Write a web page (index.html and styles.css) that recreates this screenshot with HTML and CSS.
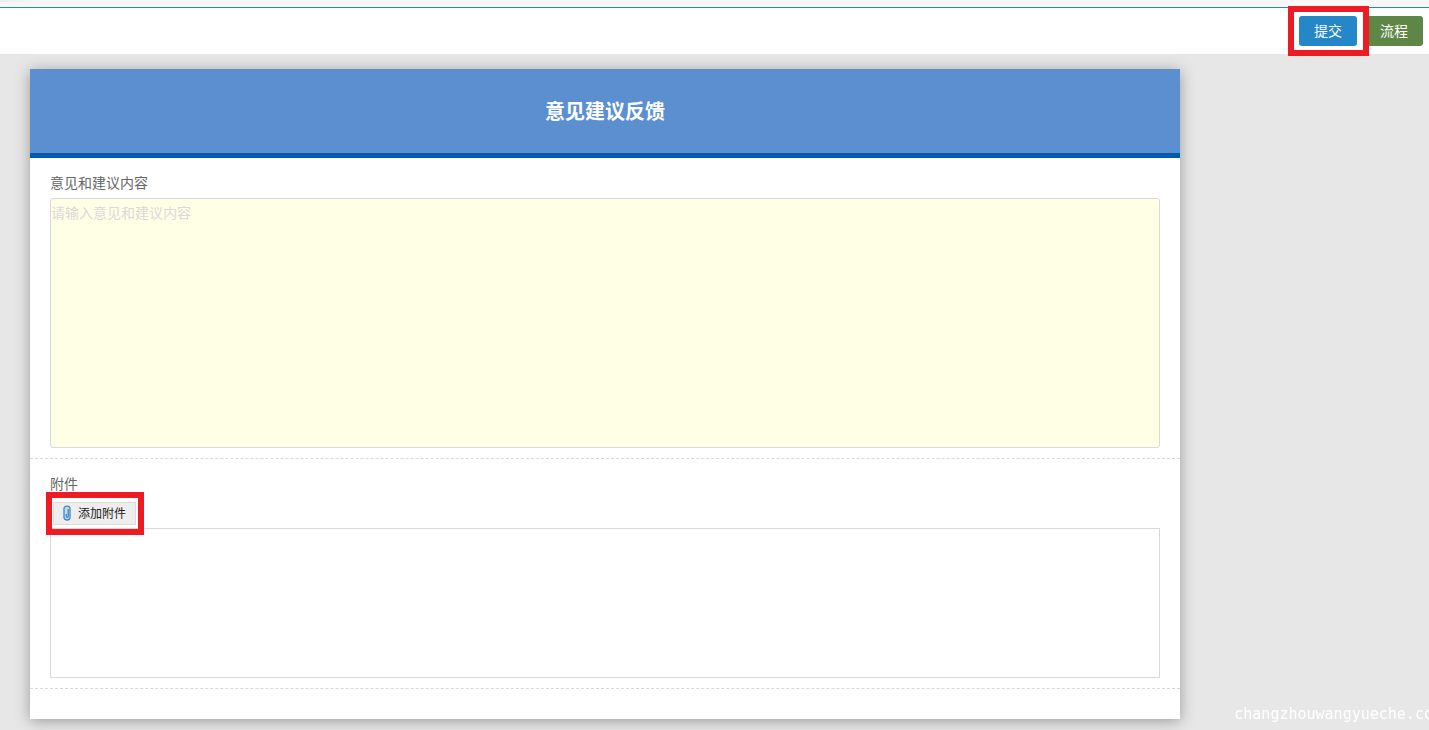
FILE: index.html
```html
<!DOCTYPE html>
<html lang="zh-CN">
<head>
<meta charset="utf-8">
<title>意见建议反馈</title>
<link rel="stylesheet" href="styles.css">
</head>
<body>
<div class="top-strip"></div>
<header class="toolbar">
  <span class="marked marked-submit"><button class="btn btn-submit" type="submit" form="feedback">提交</button></span>
  <button class="btn btn-flow" type="button">流程</button>
</header>
<main class="page">
  <form class="card" id="feedback">
    <h1 class="card-title">意见建议反馈</h1>
    <section class="field">
      <label class="field-label" for="content">意见和建议内容</label>
      <textarea class="content-input" id="content" placeholder="请输入意见和建议内容"></textarea>
    </section>
    <section class="field">
      <span class="field-label" id="files-label">附件</span>
      <div class="attach-bar">
        <span class="marked marked-attach"><button class="attach-btn" type="button">
          <svg class="clip" viewBox="0 0 8 16" aria-hidden="true">
            <rect class="clip-fill" x="1" y="1" width="6" height="14" rx="3"/>
            <path class="clip-line" d="M1 7V3.500C1 .3 7 .3 7 3.500V12.500C7 15.800 1 15.800 1 12.500V5M3.200 9V11C3.200 12.800 5.200 12.800 5.200 11V4"/>
          </svg>添加附件</button></span>
      </div>
      <div class="attach-list" role="group" aria-labelledby="files-label"></div>
    </section>
  </form>
</main>
<div class="watermark">changzhouwangyueche.com</div>
</body>
</html>
```
FILE: styles.css
```css
* {
  box-sizing: border-box;
}

body {
  display: flex;
  flex-direction: column;
  min-height: 100vh;
  margin: 0;
  overflow-x: hidden;
  background: #e7e7e7;
  color: #666;
  font: 14px/20px "Noto Sans CJK SC", sans-serif;
}

button,
textarea {
  margin: 0;
  font-family: inherit;
}

.top-strip {
  height: 8px;
  background: linear-gradient(90deg, #eee 0, #f7f7f7 48px) top left / 48px 2px no-repeat #f7f7f7;
  border-bottom: 1px solid #2587c8;
}

.toolbar {
  display: flex;
  justify-content: flex-end;
  gap: 8px;
  padding: 8px 6px;
  background: #fff;
}

.btn {
  display: block;
  width: 58px;
  height: 30px;
  padding: 0 0 2px;
  border: 0;
  border-radius: 3px;
  color: #fff;
  font-size: 14px;
  line-height: 28px;
}

.btn-submit {
  background: #2587c8;
}

.btn-flow {
  background: #5e8746;
}

/* Red highlight frame drawn over the surrounding content */
.marked {
  position: relative;
  display: block;
  z-index: 1;
}

.marked::after {
  content: "";
  position: absolute;
  border: 6px solid #ed1c24;
  pointer-events: none;
}

.marked-submit::after {
  inset: -10px -12px -10px -11px;
}

.marked-attach::after {
  inset: -10px -8px -10px -7px;
}

.page {
  padding: 15px 30px 11px;
}

.card {
  max-width: 1150px;
  padding-bottom: 30px;
  background: #fff;
  box-shadow: 0 2px 14px #999;
}

.card-title {
  margin: 0;
  padding: 27px 20px;
  background: #5b8fd0;
  border-bottom: 5px solid #005bac;
  color: #fff;
  font-size: 20px;
  line-height: 30px;
  font-weight: 700;
  text-align: center;
}

.field {
  padding: 14px 20px 10px;
  border-bottom: 1px dashed #d9d9d9;
}

.field-label {
  display: block;
  padding-bottom: 6px;
}

.content-input {
  display: block;
  width: 100%;
  height: 250px;
  padding: 3px 0;
  border: 1px solid #d9d9d9;
  border-radius: 3px;
  background: #ffffe5;
  font-size: 14px;
  line-height: 20px;
  resize: none;
}

.content-input::placeholder {
  color: #d9d9d9;
}

.attach-bar {
  display: flex;
  padding: 3px 3px;
}

.attach-btn {
  display: flex;
  align-items: center;
  gap: 7px;
  height: 23px;
  padding: 0 9px 1px;
  border: 1px solid #ddd;
  background: #eee;
  color: #222;
  font-size: 12px;
  line-height: 20px;
}

.clip {
  width: 8px;
  height: 16px;
}

.clip-fill {
  fill: #c5dcf0;
}

.clip-line {
  fill: none;
  stroke: #4386c6;
  stroke-width: 1.300;
}

.attach-list {
  height: 150px;
  border: 1px solid #d9d9d9;
}

.watermark {
  position: fixed;
  right: -13px;
  bottom: 6px;
  color: #fff;
  font: 15px/20px "DejaVu Sans Mono", monospace;
  pointer-events: none;
}
```
